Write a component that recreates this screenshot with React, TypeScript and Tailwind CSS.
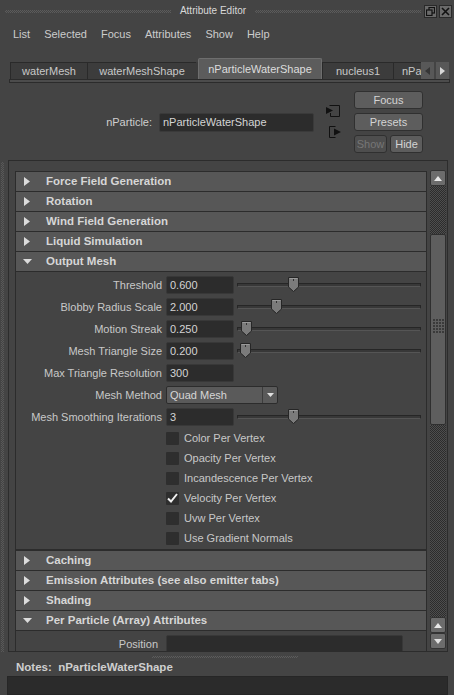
import React from "react";

type Field = { label: string; value?: string; thumb?: number; dropdown?: string };

const fields: Field[] = [
  { label: "Threshold", value: "0.600", thumb: 293 },
  { label: "Blobby Radius Scale", value: "2.000", thumb: 276 },
  { label: "Motion Streak", value: "0.250", thumb: 246 },
  { label: "Mesh Triangle Size", value: "0.200", thumb: 245 },
  { label: "Max Triangle Resolution", value: "300" },
  { label: "Mesh Method", dropdown: "Quad Mesh" },
  { label: "Mesh Smoothing Iterations", value: "3", thumb: 293 },
];

const checks = [
  { label: "Color Per Vertex", on: false },
  { label: "Opacity Per Vertex", on: false },
  { label: "Incandescence Per Vertex", on: false },
  { label: "Velocity Per Vertex", on: true },
  { label: "Uvw Per Vertex", on: false },
  { label: "Use Gradient Normals", on: false },
];

function Tri({ open }: { open: boolean }) {
  return open ? (
    <svg width="9" height="5" viewBox="0 0 9 5">
      <path d="M0 0 H9 L4.5 5Z" fill="#dcdcdc" />
    </svg>
  ) : (
    <svg width="6" height="9" viewBox="0 0 6 9">
      <path d="M0 0 L6 4.5 L0 9Z" fill="#dcdcdc" />
    </svg>
  );
}

function Header({ title, open = false }: { title: string; open?: boolean }) {
  return (
    <div className="h-[20px] shrink-0 flex items-center bg-[#575757] border-t border-x border-[#2c2c2c]">
      <div className={open ? "w-[30px] pl-[7px] flex items-center" : "w-[30px] pl-[8px] flex items-center"}>
        <Tri open={open} />
      </div>
      <span className="font-bold text-[11.5px] text-[#d6d6d6] whitespace-nowrap">{title}</span>
    </div>
  );
}

function Slider({ pos }: { pos: number }) {
  const left = pos - 237 - 5;
  return (
    <div className="relative ml-[3px] w-[184px] h-[18px] flex items-center">
      <div className="w-full h-[4px] mt-[-1px] border border-[#262626] border-b-[#555] bg-[#383838]" />
      <svg className="absolute top-[1px]" style={{ left }} width="11" height="15" viewBox="0 0 11 15">
        <path d="M0.5 0.5 H10.5 V10 L5.5 14.5 L0.5 10Z" fill="#7b7b7b" stroke="#262626" />
        <path d="M1.5 1.5 H9.5" stroke="#9a9a9a" />
        <rect x="5" y="2" width="1" height="2" fill="#333" />
      </svg>
    </div>
  );
}

function Btn({ children, dim = false, w }: { children: React.ReactNode; dim?: boolean; w: string }) {
  return (
    <div
      className={
        (dim
          ? "bg-[#4e4e4e] text-[#767676] "
          : "bg-[#5d5d5d] text-[#d4d4d4] ") +
        w +
        " h-[18px] border border-[#303030] rounded-[3px] flex items-center justify-center text-[11px]"
      }
    >
      {children}
    </div>
  );
}

function ScrollBtn({ up }: { up: boolean }) {
  return (
    <div className="h-[16px] shrink-0 bg-[#6c6c6c] border border-[#333] rounded-[2px] flex items-center justify-center">
      <svg width="8" height="5" viewBox="0 0 8 5">
        {up ? <path d="M0 5 L4 0 L8 5Z" fill="#e8e8e8" /> : <path d="M0 0 H8 L4 5Z" fill="#e0e0e0" />}
      </svg>
    </div>
  );
}

export default function App() {
  return (
    <div className="w-[454px] h-[695px] overflow-hidden bg-[#444444] text-[#c8c8c8] text-[11px] leading-none font-['Liberation_Sans',Arial,sans-serif] flex flex-col select-none">
      {/* Title bar */}
      <div className="h-[22px] shrink-0 flex items-center pl-[5px] pr-[2px]">
        <div className="flex-1 h-[3px] bg-[repeating-conic-gradient(#5c5c5c_0%_25%,transparent_0%_50%)] bg-[length:2px_2px]" />
        <div className="px-[9px] text-[10px] text-[#d8d8d8]">Attribute Editor</div>
        <div className="flex-1 h-[3px] bg-[repeating-conic-gradient(#5c5c5c_0%_25%,transparent_0%_50%)] bg-[length:2px_2px]" />
        <div className="flex gap-[2px] ml-[3px]">
          <div className="w-[13px] h-[13px] bg-[#6a6a6a] border border-[#2a2a2a] flex items-center justify-center">
            <svg width="9" height="9" viewBox="0 0 9 9">
              <rect x="3" y="0.5" width="5.5" height="5.5" fill="none" stroke="#111" strokeWidth="1.2" />
              <rect x="0.5" y="3" width="5.5" height="5.5" fill="#6a6a6a" stroke="#111" strokeWidth="1.2" />
            </svg>
          </div>
          <div className="w-[13px] h-[13px] bg-[#6a6a6a] border border-[#2a2a2a] flex items-center justify-center">
            <svg width="9" height="9" viewBox="0 0 9 9">
              <path d="M1 1 L8 8 M8 1 L1 8" stroke="#111" strokeWidth="1.6" />
            </svg>
          </div>
        </div>
      </div>

      {/* Menu bar */}
      <div className="h-[24px] shrink-0 flex items-center gap-[14px] pl-[13px] text-[#cccccc]">
        <span>List</span>
        <span>Selected</span>
        <span>Focus</span>
        <span>Attributes</span>
        <span>Show</span>
        <span>Help</span>
      </div>

      {/* Tabs */}
      <div className="h-[11px] shrink-0" />
      <div className="h-[22px] shrink-0 flex items-end pl-[10px] pr-[5px]">
        <div className="w-[411px] overflow-hidden flex items-end">
          <div className="w-[77px] shrink-0 h-[17px] bg-[#3c3c3c] border-t border-l border-[#2a2a2a] flex items-center justify-center">waterMesh</div>
          <div className="w-[109px] shrink-0 h-[17px] bg-[#3c3c3c] border-t border-l border-[#2a2a2a] flex items-center justify-center">waterMeshShape</div>
          <div className="w-[2px] shrink-0 h-[17px] bg-[#3c3c3c]" />
          <div className="w-[124px] shrink-0 h-[21px] bg-[#5c5c5c] border-t border-x border-[#6e6e6e] rounded-t-[2px] flex items-center justify-center text-[#dcdcdc]">nParticleWaterShape</div>
          <div className="w-[71px] shrink-0 h-[17px] bg-[#3c3c3c] border-t border-l border-[#2a2a2a] flex items-center justify-center">nucleus1</div>
          <div className="w-[130px] shrink-0 h-[17px] bg-[#3c3c3c] border-t border-l border-[#2a2a2a] flex items-center pl-[8px] whitespace-nowrap">nParticleWaterShape1</div>
        </div>
        <div className="flex gap-[2px]">
          <div className="w-[13px] h-[17px] bg-[#585858] flex items-center justify-center">
            <svg width="5" height="8" viewBox="0 0 5 8"><path d="M5 0 V8 L0 4Z" fill="#363636" /></svg>
          </div>
          <div className="w-[13px] h-[17px] bg-[#585858] flex items-center justify-center">
            <svg width="5" height="8" viewBox="0 0 5 8"><path d="M0 0 V8 L5 4Z" fill="#d8d8d8" /></svg>
          </div>
        </div>
      </div>
      <div className="h-[4px] shrink-0 mx-[9px] mr-[4px] border border-[#2b2b2b] bg-[#4c4c4c]" />

      {/* Node row */}
      <div className="h-[77px] shrink-0 flex items-start pt-[8px] pr-[31px]">
        <div className="flex-1 h-[62px] flex items-center justify-end">
          <span className="text-[#cfcfcf]">nParticle:</span>
          <div className="ml-[7px] w-[155px] h-[19px] bg-[#2c2c2c] border border-[#3a3a3a] rounded-[2px] flex items-center pl-[3px] text-[#d4d4d4]">
            nParticleWaterShape
          </div>
        </div>
        <div className="ml-[11px] w-[17px] h-[62px] flex flex-col pt-[13px] gap-[7px]">
          <svg width="17" height="14" viewBox="0 0 17 14">
            <path d="M4.5 1.5 H14.5 V12.5 H5.5 V9" fill="none" stroke="#111" strokeWidth="1" />
            <path d="M1 3 L8 6.5 L1 10Z" fill="#111" />
          </svg>
          <svg width="17" height="14" viewBox="0 0 17 14">
            <path d="M10.5 1.5 H4.5 V12.5 H10.5" fill="none" stroke="#111" strokeWidth="1" />
            <path d="M9 3.5 L16 7 L9 10.5Z" fill="#111" />
          </svg>
        </div>
        <div className="ml-[12px] w-[69px] flex flex-col gap-[4px]">
          <Btn w="w-[69px]">Focus</Btn>
          <Btn w="w-[69px]">Presets</Btn>
          <div className="flex gap-[3px]">
            <Btn w="w-[33px]" dim>Show</Btn>
            <Btn w="w-[33px]">Hide</Btn>
          </div>
        </div>
      </div>

      {/* Main panel row */}
      <div className="h-[492px] shrink-0 flex">
        <div className="w-[8px] shrink-0 flex pl-[1px] pt-[2px]">
          <div className="w-[3px] h-full bg-[repeating-conic-gradient(#595959_0%_25%,transparent_0%_50%)] bg-[length:2px_2px]" />
        </div>
        <div className="flex-1 mr-[6px] border border-[#2c2c2c] flex">
          {/* scroll content */}
          <div className="flex-1 pl-[6px] pt-[10px] overflow-hidden flex flex-col">
            <Header title="Force Field Generation" />
            <Header title="Rotation" />
            <Header title="Wind Field Generation" />
            <Header title="Liquid Simulation" />
            <Header title="Output Mesh" open />
            <div className="shrink-0 border-x border-b border-[#2c2c2c] border-t border-t-[#2c2c2c] pt-[4px] pb-[1px]">
              <div className="flex flex-col gap-[4px]">
                {fields.map((f) => (
                  <div key={f.label} className="h-[18px] flex items-center">
                    <div className="w-[150px] shrink-0 pr-[4px] text-right whitespace-nowrap">{f.label}</div>
                    {f.dropdown ? (
                      <div className="w-[112px] h-[18px] bg-[#5a5a5a] border border-[#2c2c2c] rounded-[2px] flex items-center">
                        <span className="flex-1 pl-[3px] text-[#d6d6d6]">{f.dropdown}</span>
                        <div className="w-[15px] h-full border-l border-[#3c3c3c] flex items-center justify-center">
                          <svg width="7" height="4" viewBox="0 0 7 4"><path d="M0 0 H7 L3.5 4Z" fill="#e0e0e0" /></svg>
                        </div>
                      </div>
                    ) : (
                      <div className="w-[68px] h-[18px] bg-[#2c2c2c] border border-[#383838] rounded-[2px] flex items-center pl-[3px] text-[#d4d4d4]">
                        {f.value}
                      </div>
                    )}
                    {f.thumb !== undefined && <Slider pos={f.thumb} />}
                  </div>
                ))}
              </div>
              <div className="mt-[2px] flex flex-col">
                {checks.map((c) => (
                  <div key={c.label} className="h-[20px] flex items-center pl-[150px]">
                    <div className="w-[13px] h-[13px] bg-[#2e2e2e] rounded-[1px] flex items-center justify-center">
                      {c.on && (
                        <svg width="11" height="10" viewBox="0 0 11 10">
                          <path d="M1 5.5 L4 8.5 L10 1" fill="none" stroke="#f0f0f0" strokeWidth="2" />
                        </svg>
                      )}
                    </div>
                    <span className="ml-[5px] whitespace-nowrap">{c.label}</span>
                  </div>
                ))}
              </div>
            </div>
            <Header title="Caching" />
            <Header title="Emission Attributes (see also emitter tabs)" />
            <Header title="Shading" />
            <Header title="Per Particle (Array) Attributes" open />
            <div className="shrink-0 border-x border-t border-[#2c2c2c] pt-[4px] h-[40px]">
              <div className="h-[18px] flex items-center">
                <div className="w-[150px] shrink-0 pr-[8px] text-right">Position</div>
                <div className="w-[237px] h-[18px] bg-[#2c2c2c] border border-[#383838] rounded-[2px]" />
              </div>
            </div>
          </div>
          {/* scrollbar */}
          <div className="w-[16px] ml-[3px] mr-[1px] pt-[9px] pb-[2px] flex flex-col">
            <ScrollBtn up />
            <div className="h-[48px] shrink-0 bg-[repeating-conic-gradient(#2c2c2c_0%_25%,#4e4e4e_0%_50%)] bg-[length:2px_2px]" />
            <div className="h-[191px] shrink-0 bg-[#5e5e5e] border border-[#2f2f2f] rounded-[2px] flex flex-col items-center pt-[84px]">
              <div className="grid grid-cols-4 gap-[1px]">
                {Array.from({ length: 20 }).map((_, i) => (
                  <div key={i} className="w-[2px] h-[2px] bg-[#3a3a3a]" />
                ))}
              </div>
            </div>
            <div className="flex-1 bg-[repeating-conic-gradient(#2c2c2c_0%_25%,#4e4e4e_0%_50%)] bg-[length:2px_2px]" />
            <ScrollBtn up />
            <ScrollBtn up={false} />
          </div>
        </div>
      </div>

      {/* splitter */}
      <div className="h-[10px] shrink-0 flex items-center justify-center pr-[4px]">
        <div className="w-[146px] h-[2px] bg-[repeating-conic-gradient(#5c5c5c_0%_25%,transparent_0%_50%)] bg-[length:2px_2px]" />
      </div>
      <div className="h-[12px] shrink-0 flex items-center pl-[16px] font-bold text-[11.5px] text-[#cfcfcf]">
        Notes:&nbsp; nParticleWaterShape
      </div>
      <div className="h-[2px] shrink-0" />
      <div className="flex-1 mx-[7px] mr-[6px] bg-[#2b2b2b] border border-[#262626]" />
    </div>
  );
}
